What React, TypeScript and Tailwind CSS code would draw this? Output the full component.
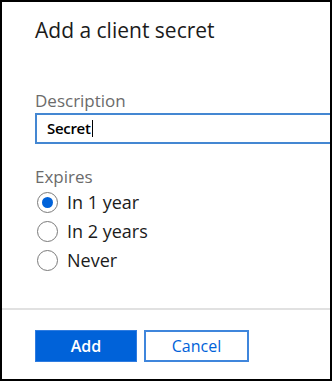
import { useState } from "react";

const options = ["In 1 year", "In 2 years", "Never"];

export default function App() {
  const [expires, setExpires] = useState("In 1 year");

  return (
    <div
      className="w-[332px] h-[381px] bg-white border-2 border-black overflow-hidden flex flex-col text-[#1b1b1b]"
      style={{ fontFamily: '"Open Sans", "Noto Sans", sans-serif' }}
    >
      <div className="pl-[33px] flex flex-col">
        {/* Title */}
        <h2 className="mt-[14px] text-[21px] leading-[28px] text-[#1b1b1b]">
          Add a client secret
        </h2>

        {/* Description */}
        <label className="mt-[46px] text-[17px] leading-[22px] text-[#6b6b6b]">
          Description
        </label>
        <div className="mt-[1px] w-[320px] h-[31px] border-2 border-[#4487d2] flex items-center pl-[10px]">
          <span className="text-[15px] font-semibold text-black tracking-[-0.3px]">Secret</span>
          <span className="w-[1.5px] h-[17px] bg-black ml-[1px]" />
        </div>

        {/* Expires */}
        <label className="mt-[22px] text-[17px] leading-[22px] text-[#6b6b6b]">
          Expires
        </label>
        <div className="flex flex-col">
          {options.map((opt) => (
            <button
              key={opt}
              onClick={() => setExpires(opt)}
              className="h-[29px] flex items-center gap-[9px] text-left"
            >
              <span className="w-[21px] h-[21px] ml-[2px] rounded-full border-[1.5px] border-[#7a7a7a] flex items-center justify-center">
                {expires === opt && <span className="w-[11px] h-[11px] rounded-full bg-[#0062d9]" />}
              </span>
              <span className="text-[18px] text-[#1b1b1b]">{opt}</span>
            </button>
          ))}
        </div>
      </div>

      {/* Footer */}
      <div className="mt-auto border-t-2 border-[#e1e1e1] h-[71px] pl-[33px] pt-[20px] flex gap-[7px]">
        <button className="w-[102px] h-[32px] bg-[#0062d9] text-white text-[16px] font-semibold border border-[#2f7ce0]">
          Add
        </button>
        <button className="w-[105px] h-[32px] bg-white text-[#0062d9] text-[16px] border-2 border-[#3f86dc]">
          Cancel
        </button>
      </div>
    </div>
  );
}
